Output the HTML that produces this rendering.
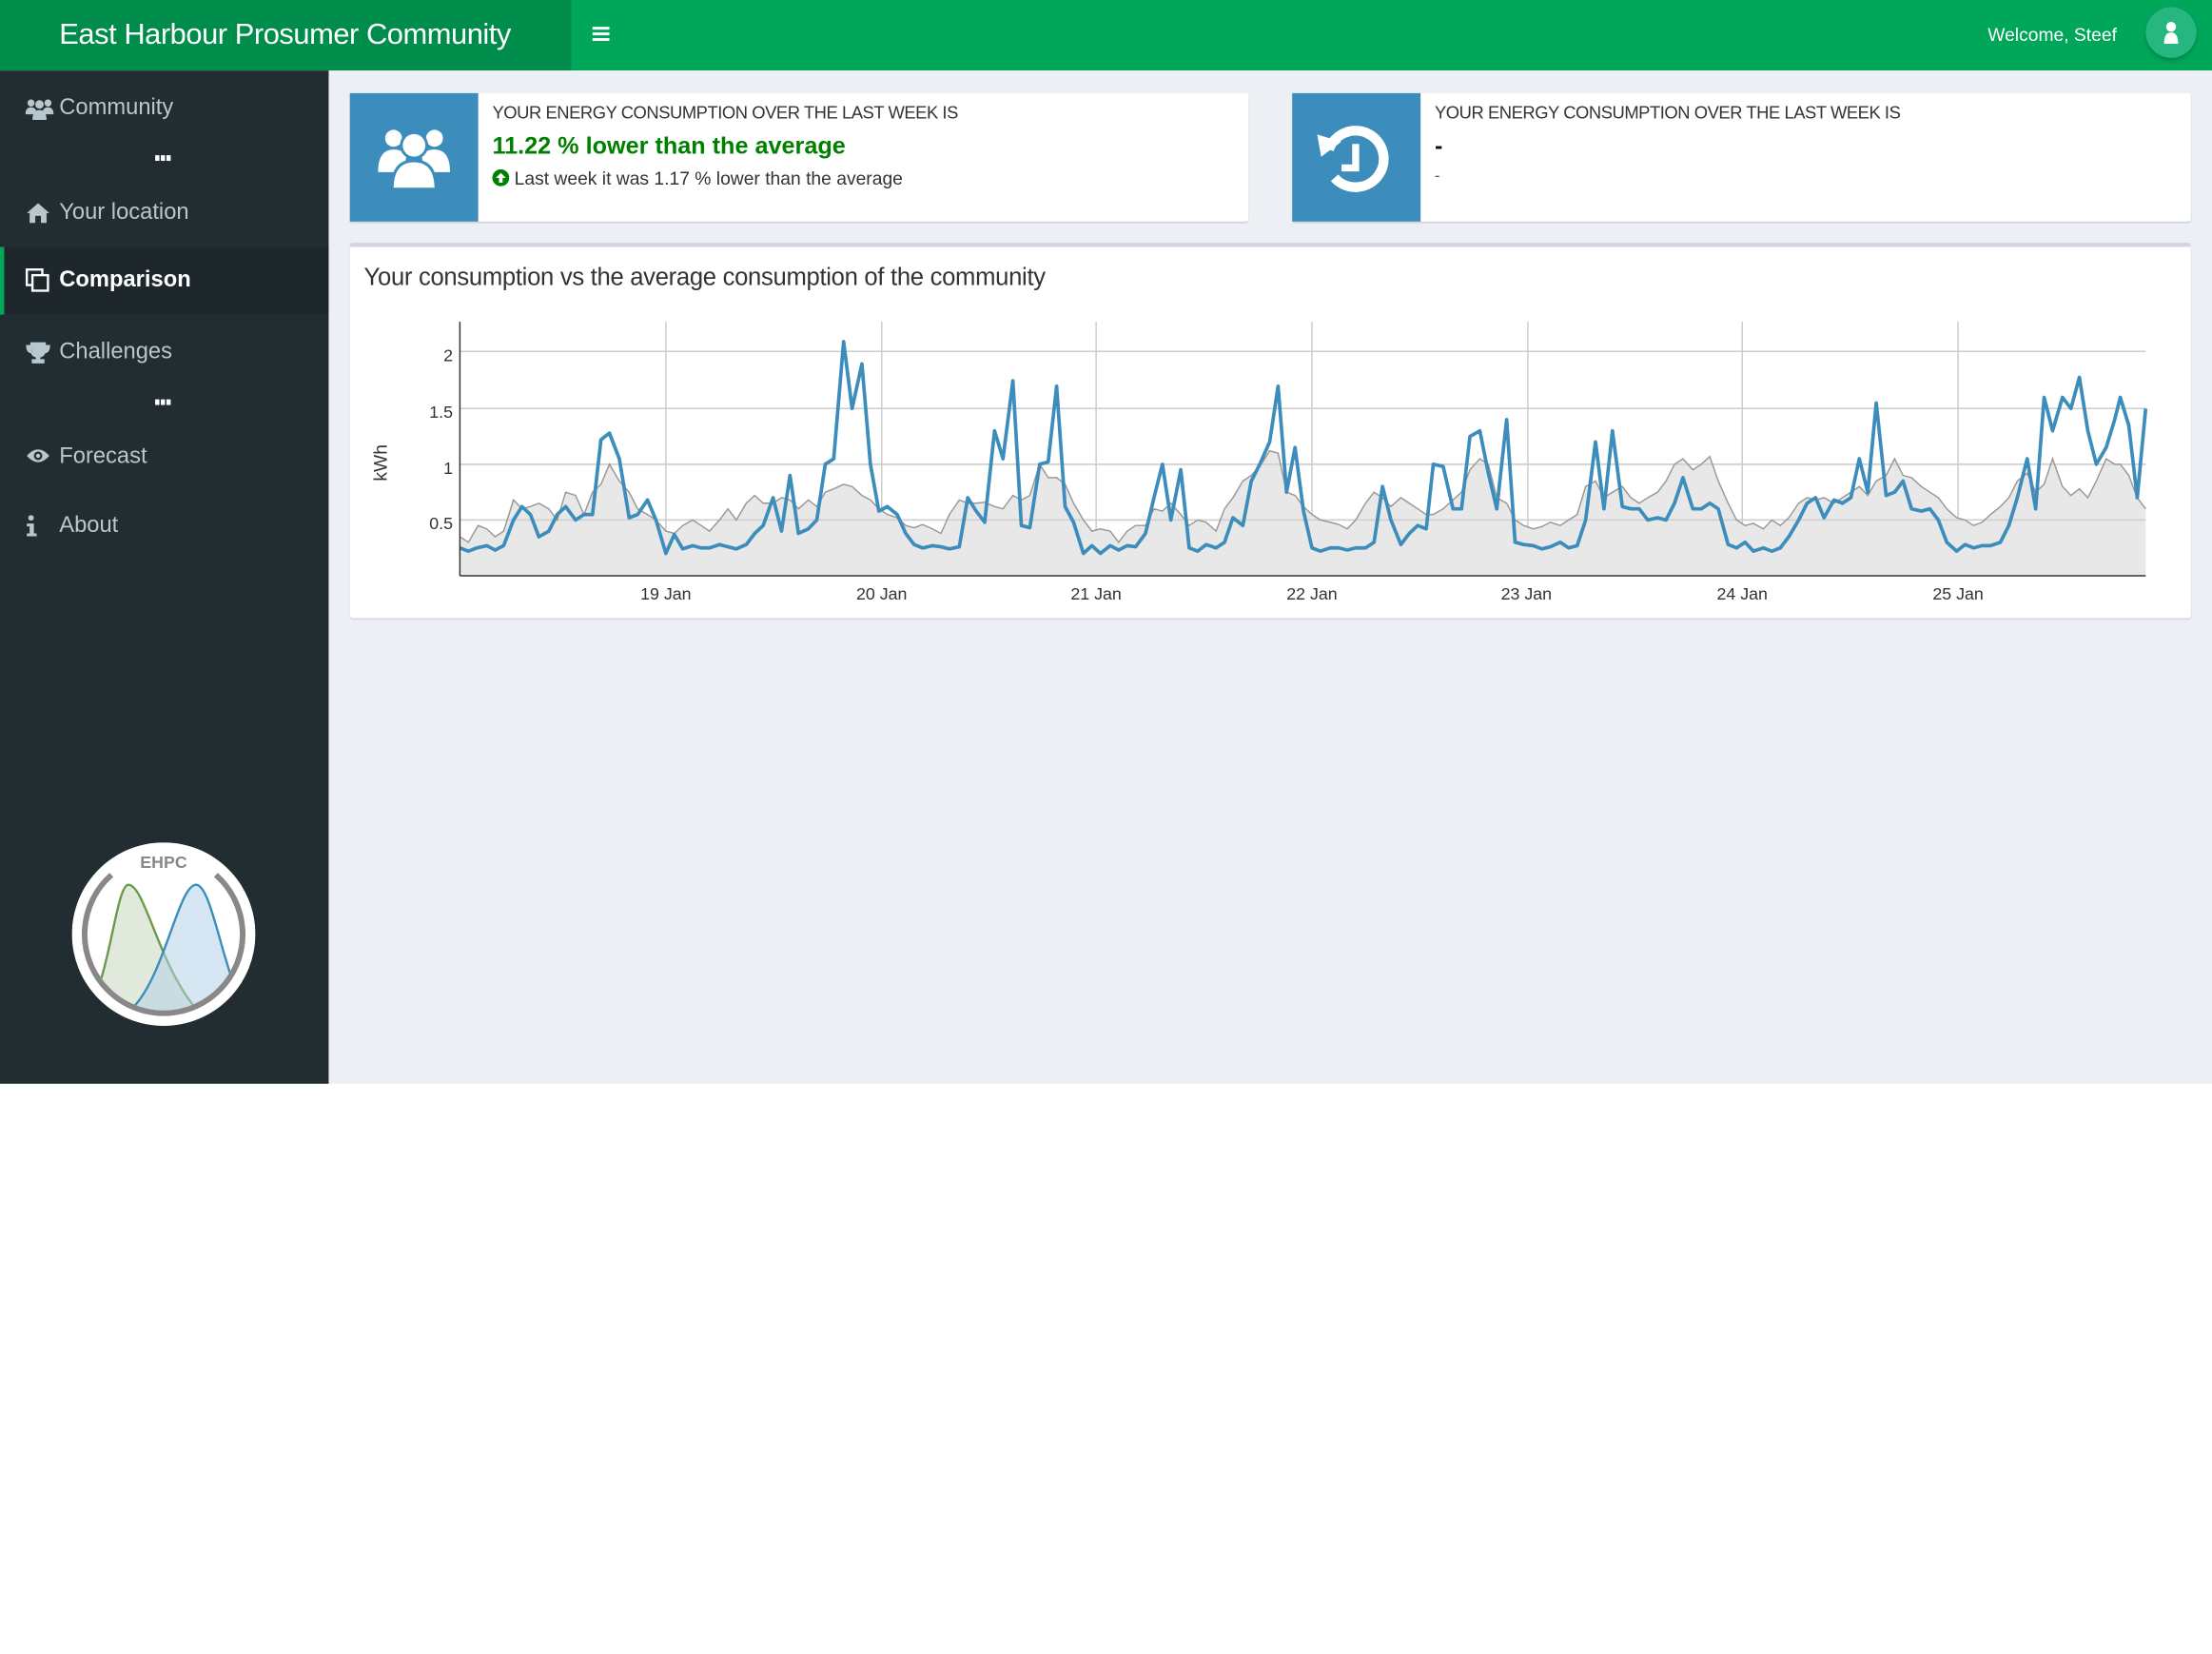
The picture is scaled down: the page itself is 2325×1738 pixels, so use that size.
<!DOCTYPE html>
<html><head><meta charset="utf-8"><style>
html,body{margin:0;padding:0;background:#fff;overflow:hidden}
body{width:2325px;height:1738px}
#w{position:absolute;left:0;top:0;width:1568px;height:1172px;transform:scale(1.48278);transform-origin:0 0;font-family:"Liberation Sans",sans-serif}
.hdr{position:absolute;left:0;top:0;width:1568px;height:50px;background:#00a65a}
.brand{position:absolute;left:0;top:0;width:405px;height:50px;background:#008d4c;color:#fff;font-size:20.8px;line-height:50px;text-indent:42px;letter-spacing:-0.3px}
.side{position:absolute;left:0;top:50px;width:233px;height:718px;background:#222d32}
.content{position:absolute;left:233px;top:50px;width:1335px;height:718px;background:#ecf0f5}
.mi{position:absolute;left:0;width:233px;height:48px;line-height:48px;color:#b8c7ce;font-size:16px}
.mi span{position:absolute;left:42px}
.mi svg{position:absolute;left:18px;top:16px}
.act{background:#1e282c;color:#fff;border-left:3px solid #00a65a;width:230px}
.dots{position:absolute;left:110px;width:14px;height:4px}
.dots i{float:left;width:3px;height:4px;background:#fff;margin-right:1px}
.box{position:absolute;background:#fff;box-shadow:0 1px 1px rgba(0,0,0,.12);border-radius:2px}
.ic{position:absolute;left:0;top:0;width:91px;height:91px;background:#3c8dbc}
.t1{position:absolute;left:101px;top:7px;font-size:12.4px;color:#333;letter-spacing:-0.3px}
</style></head><body><div id="w">
<div class="hdr"><div class="brand">East Harbour Prosumer Community</div>
<div style="position:absolute;left:420px;top:19px;width:12px">
<div style="height:2px;background:#fff;margin-bottom:2px"></div><div style="height:2px;background:#fff;margin-bottom:2px"></div><div style="height:2px;background:#fff"></div></div>
<div style="position:absolute;left:1409px;top:17px;color:#fff;font-size:13px">Welcome, Steef</div>
<div style="position:absolute;left:1521px;top:5px;width:36px;height:36px;border-radius:50%;background:#26b67f;box-shadow:0 2px 3px rgba(0,0,0,.2)">
<svg width="36" height="36"><circle cx="18" cy="14" r="3.5" fill="#fff"/><path d="M13 26 Q13 18 18 18 Q23 18 23 26 Z" fill="#fff"/></svg></div>
</div>
<div class="side">
<div class="mi" style="top:3px"><svg width="20" height="16" viewBox="0 0 20 16"><circle cx="4" cy="4" r="2.5" fill="#b8c7ce"/><circle cx="16" cy="4" r="2.5" fill="#b8c7ce"/><circle cx="10" cy="5" r="3" fill="#b8c7ce"/><path d="M0 12 Q0 7 4 7 Q8 7 8 12Z M12 12 Q12 7 16 7 Q20 7 20 12Z M5 16 Q5 9 10 9 Q15 9 15 16Z" fill="#b8c7ce"/></svg><span>Community</span></div>
<div class="dots" style="top:60px"><i></i><i></i><i></i></div>
<div class="mi" style="top:77px"><svg width="18" height="16" viewBox="0 0 18 16"><path d="M9 1 L17 8 L15 8 L15 15 L11 15 L11 10 L7 10 L7 15 L3 15 L3 8 L1 8Z" fill="#b8c7ce"/></svg><span>Your location</span></div>
<div class="mi act" style="top:125px"><svg width="18" height="18" viewBox="0 0 18 18" style="left:15px;top:15px"><rect x="1" y="1" width="11" height="11" fill="none" stroke="#fff" stroke-width="1.6"/><rect x="5" y="5" width="11" height="11" fill="#1e282c" stroke="#fff" stroke-width="1.6"/></svg><span style="left:39px;font-weight:bold">Comparison</span></div>
<div class="mi" style="top:176px"><svg width="18" height="16" viewBox="0 0 18 16"><path d="M4 1 H14 V6 Q14 10 10 11 V13 H13 V15 H5 V13 H8 V11 Q4 10 4 6Z M4 3 H1 Q1 8 5 8 M14 3 H17 Q17 8 13 8" fill="#b8c7ce" stroke="#b8c7ce" stroke-width="1"/></svg><span>Challenges</span></div>
<div class="dots" style="top:233px"><i></i><i></i><i></i></div>
<div class="mi" style="top:250px"><svg width="18" height="14" viewBox="0 0 18 14"><path d="M1 7 Q9 -2 17 7 Q9 16 1 7Z" fill="#b8c7ce"/><circle cx="9" cy="7" r="3" fill="#222d32"/><circle cx="9" cy="7" r="1.5" fill="#b8c7ce"/></svg><span>Forecast</span></div>
<div class="mi" style="top:299px"><svg width="10" height="16" viewBox="0 0 10 16"><circle cx="4" cy="2" r="2" fill="#b8c7ce"/><path d="M1 6 H6 V13 H8 V15 H1 V13 H3 V8 H1Z" fill="#b8c7ce"/></svg><span>About</span></div>
<svg style="position:absolute;left:51px;top:547px" width="130" height="130" viewBox="0 0 130 130">
<defs><clipPath id="cp"><circle cx="65" cy="65" r="54"/></clipPath></defs>
<circle cx="65" cy="65" r="65" fill="#fff"/>
<g clip-path="url(#cp)">
<path d="M5 120 C25 120 30 30 40 30 C52 30 62 90 90 120Z" fill="#e1e9dc" stroke="#6a9a4c" stroke-width="1.6"/>
<path d="M40 120 C65 100 75 30 88 30 C100 30 108 100 125 120Z" fill="rgba(180,210,232,.55)" stroke="#3c8dbc" stroke-width="1.6"/>
</g>
<path d="M28 23 A56 56 0 1 0 102 23" fill="none" stroke="#888" stroke-width="4"/>
<text x="65" y="18" text-anchor="middle" font-family="Liberation Sans,sans-serif" font-weight="bold" font-size="12" fill="#888">EHPC</text>
</svg>
</div>
<div class="content"></div>
<div class="box" style="left:248px;top:66px;width:637px;height:91px"><div class="ic">
<svg width="91" height="91" viewBox="0 0 91 91"><g fill="#fff"><circle cx="31" cy="32" r="6"/><circle cx="60" cy="32" r="6"/><path d="M20 56 Q20 40 31 40 Q38 40 40 45 L38 56Z M71 56 Q71 40 60 40 Q53 40 51 45 L53 56Z"/><circle cx="45.5" cy="37" r="9" stroke="#3c8dbc" stroke-width="2"/><path d="M30 68 Q30 48 45.5 48 Q61 48 61 68Z" stroke="#3c8dbc" stroke-width="2"/></g></svg></div>
<div class="t1">YOUR ENERGY CONSUMPTION OVER THE LAST WEEK IS</div>
<div style="position:absolute;left:101px;top:28px;font-size:17px;font-weight:bold;color:#008000">11.22 % lower than the average</div>
<div style="position:absolute;left:101px;top:53px;font-size:13px;color:#333"><svg width="12" height="12" viewBox="0 0 12 12" style="vertical-align:-1px"><circle cx="6" cy="6" r="6" fill="#008000"/><path d="M6 2.5 L9.5 6 H7.3 V9.5 H4.7 V6 H2.5Z" fill="#fff"/></svg> Last week it was 1.17 % lower than the average</div>
</div>
<div class="box" style="left:916px;top:66px;width:637px;height:91px"><div class="ic">
<svg width="91" height="91" viewBox="0 0 91 91"><path d="M26 40 A20 20 0 1 1 30 60" fill="none" stroke="#fff" stroke-width="7"/><path d="M19 28 L35 36 L19 44Z" fill="#fff" transform="rotate(-10 26 36)"/><path d="M45 36 V53 H35" fill="none" stroke="#fff" stroke-width="5"/></svg></div>
<div class="t1">YOUR ENERGY CONSUMPTION OVER THE LAST WEEK IS</div>
<div style="position:absolute;left:101px;top:28px;font-size:17px;font-weight:bold;color:#111">-</div>
<div style="position:absolute;left:101px;top:53px;font-size:11px;color:#555">-</div>
</div>
<div class="box" style="left:248px;top:172px;width:1305px;height:266px;border-top:3px solid #d2d6de;box-sizing:border-box">
<div style="position:absolute;left:10px;top:11px;font-size:17.3px;color:#333;letter-spacing:-0.2px">Your consumption vs the average consumption of the community</div>
</div>
<svg id="ch" style="position:absolute;left:0;top:0" width="1568" height="440" font-family="Liberation Sans,sans-serif">
<g stroke="#ccc" stroke-width="1"><line x1="326" y1="249" x2="1521" y2="249"/><line x1="326" y1="289.5" x2="1521" y2="289.5"/><line x1="326" y1="329" x2="1521" y2="329"/><line x1="326" y1="368.5" x2="1521" y2="368.5"/>
<line x1="472" y1="228" x2="472" y2="408"/><line x1="625" y1="228" x2="625" y2="408"/><line x1="777" y1="228" x2="777" y2="408"/><line x1="930" y1="228" x2="930" y2="408"/><line x1="1083" y1="228" x2="1083" y2="408"/><line x1="1235" y1="228" x2="1235" y2="408"/><line x1="1388" y1="228" x2="1388" y2="408"/></g>
<path id="gf" fill="#e8e8e8" stroke="none"/>
<g stroke="#cfcfcf" stroke-width="1"><line x1="326" y1="368.5" x2="1521" y2="368.5"/><line x1="326" y1="329" x2="1521" y2="329"/></g>
<polyline id="gl" fill="none" stroke="#999" stroke-width="1"/>
<polyline id="bl" fill="none" stroke="#3c8dbc" stroke-width="2.5" stroke-linejoin="round"/>
<line x1="326" y1="228" x2="326" y2="408" stroke="#333"/><line x1="326" y1="408" x2="1521" y2="408" stroke="#333"/>
<g font-size="12" fill="#333" text-anchor="end"><text x="321" y="256">2</text><text x="321" y="296">1.5</text><text x="321" y="336">1</text><text x="321" y="375">0.5</text></g>
<g font-size="12" fill="#333" text-anchor="middle"><text x="472" y="425">19 Jan</text><text x="625" y="425">20 Jan</text><text x="777" y="425">21 Jan</text><text x="930" y="425">22 Jan</text><text x="1082" y="425">23 Jan</text><text x="1235" y="425">24 Jan</text><text x="1388" y="425">25 Jan</text></g>
<text transform="translate(274,328) rotate(-90)" font-size="13" fill="#333" text-anchor="middle">kWh</text>
</svg>
</div>
<script>
var B=[326,.25,332,.22,338,.25,345,.27,351,.23,357,.27,364,.5,370,.62,376,.55,382,.35,389,.4,395,.55,401,.62,408,.5,414,.55,420,.55,426,1.22,432,1.28,439,1.05,446,.52,452,.55,459,.68,465,.5,472,.2,478,.37,484,.24,491,.27,497,.25,503,.25,510,.28,516,.26,522,.24,529,.28,535,.38,541,.45,548,.7,554,.4,560,.9,566,.38,573,.42,579,.5,585,1.0,591,1.05,598,2.1,604,1.5,611,1.9,617,1.0,623,.58,629,.62,636,.55,642,.38,648,.28,654,.25,661,.27,667,.26,673,.24,680,.26,686,.7,692,.58,698,.48,705,1.3,711,1.05,718,1.75,724,.45,730,.43,737,1.0,743,1.02,749,1.7,755,.62,761,.48,768,.2,774,.27,780,.2,787,.27,793,.23,799,.27,805,.26,812,.38,818,.7,824,1.0,830,.5,837,.95,843,.25,849,.22,855,.28,862,.25,868,.3,874,.52,881,.45,887,.85,893,1.0,900,1.2,906,1.7,912,.75,918,1.15,924,.58,930,.25,936,.22,943,.25,949,.25,955,.23,961,.25,968,.25,974,.3,980,.8,986,.5,993,.28,999,.38,1005,.45,1011,.42,1016,1.0,1023,.98,1030,.6,1036,.6,1042,1.25,1049,1.3,1055,.92,1061,.6,1068,1.4,1074,.3,1080,.28,1087,.27,1093,.24,1099,.26,1106,.3,1112,.25,1118,.27,1124,.5,1131,1.2,1137,.6,1143,1.3,1150,.62,1156,.6,1162,.6,1168,.5,1175,.52,1181,.5,1187,.65,1193,.88,1200,.6,1206,.6,1212,.65,1218,.6,1225,.28,1231,.25,1237,.3,1243,.22,1250,.25,1256,.22,1262,.25,1268,.35,1275,.5,1281,.65,1287,.7,1293,.52,1300,.68,1306,.65,1312,.7,1318,1.05,1324,.75,1330,1.55,1337,.72,1343,.75,1349,.85,1355,.6,1362,.58,1368,.6,1374,.5,1380,.3,1387,.22,1393,.28,1399,.25,1405,.27,1411,.27,1418,.3,1424,.45,1430,.7,1437,1.05,1443,.6,1449,1.6,1455,1.3,1462,1.6,1468,1.5,1474,1.78,1480,1.3,1486,1.0,1493,1.15,1499,1.4,1503,1.6,1509,1.35,1515,.7,1521,1.5];
var G=[326,.35,332,.3,339,.45,345,.42,351,.35,357,.4,364,.68,370,.6,376,.62,382,.65,389,.6,395,.5,401,.75,408,.72,414,.55,420,.75,426,.82,432,1.0,439,.85,446,.75,452,.6,459,.55,465,.5,472,.4,478,.38,484,.45,491,.5,497,.45,503,.4,510,.5,516,.6,522,.5,529,.65,535,.72,541,.65,548,.65,554,.7,560,.68,566,.6,573,.68,579,.62,585,.75,591,.78,598,.82,604,.8,611,.72,617,.68,623,.6,629,.55,636,.52,642,.45,648,.43,654,.46,661,.42,667,.38,673,.55,680,.68,686,.65,692,.65,698,.66,705,.62,711,.6,718,.72,724,.68,730,.72,737,1.0,743,.88,749,.88,755,.82,761,.65,768,.5,774,.4,780,.42,787,.4,793,.3,799,.4,805,.45,812,.45,818,.6,824,.58,830,.65,837,.55,843,.45,849,.5,855,.48,862,.4,868,.6,874,.7,881,.85,887,.9,893,.98,900,1.12,906,1.1,912,.75,918,.72,924,.62,930,.55,936,.5,943,.48,949,.46,955,.42,961,.5,968,.65,974,.75,980,.7,986,.62,993,.7,999,.65,1005,.6,1011,.55,1016,.55,1023,.6,1030,.68,1036,.75,1042,.95,1049,1.05,1055,1.0,1061,.7,1068,.65,1074,.5,1080,.45,1087,.42,1093,.44,1099,.48,1106,.45,1112,.5,1118,.55,1124,.8,1131,.85,1137,.7,1143,.75,1150,.8,1156,.7,1162,.65,1168,.7,1175,.75,1181,.85,1187,1.0,1193,1.05,1200,.95,1206,1.0,1212,1.07,1218,.85,1225,.65,1231,.5,1237,.45,1243,.47,1250,.42,1256,.5,1262,.45,1268,.52,1275,.65,1281,.7,1287,.68,1293,.7,1300,.65,1306,.7,1312,.75,1318,.8,1324,.72,1330,.85,1337,.9,1343,1.05,1349,.9,1355,.88,1362,.8,1368,.75,1374,.7,1380,.6,1387,.52,1393,.5,1399,.45,1405,.48,1411,.55,1418,.62,1424,.7,1430,.85,1437,.92,1443,.75,1449,.82,1455,1.05,1462,.8,1468,.72,1474,.78,1480,.7,1486,.85,1493,1.05,1499,1.0,1503,1.0,1509,.9,1515,.7,1521,.6];
function pts(a){var s=[];for(var i=0;i<a.length;i+=2)s.push(a[i]+","+(408-79*a[i+1]).toFixed(1));return s;}
var g=pts(G),b=pts(B);
document.getElementById('gl').setAttribute('points',g.join(' '));
document.getElementById('bl').setAttribute('points',b.join(' '));
document.getElementById('gf').setAttribute('d','M326,408 L'+g.join(' L')+' L1521,408Z');
</script>
</body></html>
